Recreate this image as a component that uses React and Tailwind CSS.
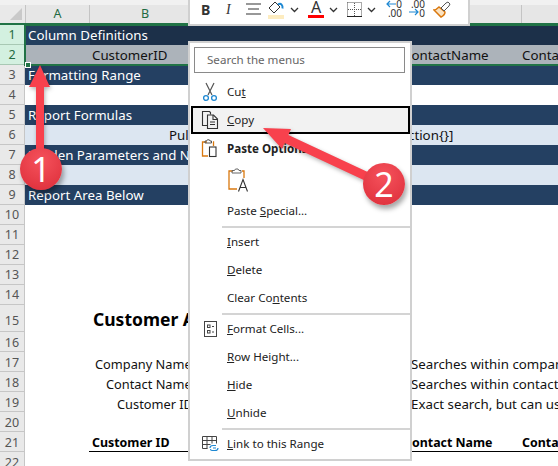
import { useState } from "react";

const cellFont = { fontFamily: '"Noto Sans", sans-serif' };

function Row({ n, h = "h-5", active, bg = "bg-white", text = "text-[#111]", labelPad = "pt-[2px]", cellPad = "pt-[2px]", children }) {
  return (
    <div className={`flex ${h} shrink-0`}>
      <div
        className={`w-[25px] shrink-0 flex items-center justify-center border-r border-b text-[12.5px] ${labelPad} ${
          active
            ? "bg-[#d3f0e0] border-[#a8c8b4] text-[#1f6b42]"
            : "bg-[#e9e9e9] border-[#c6c6c6] text-[#555]"
        }`}
      >
        {n}
      </div>
      <div className={`flex-1 flex items-center whitespace-nowrap text-[13.3px] ${cellPad} ${bg} ${text}`}>
        {children}
      </div>
    </div>
  );
}

function MenuItem({ icon, children, boxed, bold }) {
  return (
    <div
      className={`h-7 flex items-center shrink-0 ml-[1px] border-2 ${
        boxed ? "border-black bg-[#f2f2f2]" : "border-transparent"
      }`}
    >
      <div className="w-[34px] flex justify-center shrink-0">{icon}</div>
      <span className={`text-[11.6px] text-[#222] ${bold ? "font-bold" : ""}`}>{children}</span>
    </div>
  );
}

function Sep() {
  return <div className="h-[2px] mt-[1px] ml-[32px] bg-[#d4d4d4] shrink-0" />;
}

function Chevron() {
  return (
    <svg width="9" height="6" viewBox="0 0 9 6" fill="none" stroke="#333" strokeWidth="1.3">
      <path d="M1 1l3.5 3.5L8 1" />
    </svg>
  );
}

function CutIcon() {
  return (
    <svg width="16" height="20" viewBox="0 0 16 20" fill="none">
      <path d="M4 1l6 12M12 1L6 13" stroke="#555" strokeWidth="1.2" />
      <circle cx="4" cy="16" r="2.4" stroke="#1e88d2" strokeWidth="1.3" />
      <circle cx="12" cy="16" r="2.4" stroke="#1e88d2" strokeWidth="1.3" />
    </svg>
  );
}

function CopyIcon() {
  return (
    <svg width="18" height="18" viewBox="0 0 18 18" fill="none" stroke="#333" strokeWidth="1.1">
      <path d="M7 14.5H1.5v-14h7l1 1v2" />
      <path d="M6.5 4h6l4 4v9.5h-10z" />
      <path d="M12 4v4.5h4.5M9 11h5M9 13.5h5" />
    </svg>
  );
}

function PasteSmallIcon() {
  return (
    <svg width="18" height="20" viewBox="0 0 18 20" fill="none">
      <path d="M6 3H1.5v14H7" stroke="#d9780f" strokeWidth="1.3" />
      <path d="M4 4V2h1.5l.8-1.2h2L9 2h1.5v2z" stroke="#555" strokeWidth="1" />
      <path d="M12 3h.5v4" stroke="#d9780f" strokeWidth="1.3" />
      <rect x="8.5" y="8" width="6.5" height="9.5" stroke="#333" strokeWidth="1.1" />
    </svg>
  );
}

function PasteAIcon() {
  return (
    <svg width="22" height="25" viewBox="0 0 22 25" fill="none">
      <path d="M5 3H1v18h8" stroke="#d9780f" strokeWidth="1.3" />
      <path d="M14 3h2v7" stroke="#d9780f" strokeWidth="1.3" />
      <path d="M4 5V2.5h2.5L7.5 1h2.5l1 1.5H13V5z" stroke="#666" strokeWidth="1" />
      <path d="M10.5 23.5l4.5-12 4.5 12M12 19.5h6" stroke="#333" strokeWidth="1.1" />
    </svg>
  );
}

function FormatCellsIcon() {
  return (
    <svg width="13" height="16" viewBox="0 0 13 16" fill="none" stroke="#444">
      <rect x="0.5" y="0.5" width="12" height="15" />
      <rect x="3.5" y="4" width="2.5" height="2.5" />
      <rect x="3.5" y="9.5" width="2.5" height="2.5" />
      <path d="M8 5.5h2M8 11h2" />
    </svg>
  );
}

function LinkIcon() {
  return (
    <svg width="17" height="16" viewBox="0 0 17 16" fill="none">
      <path d="M.5 12.5V.5h14v7M.5 4.5h14M5 .5v12M10 .5v7M.5 8.5h8M.5 12.5h5" stroke="#444" />
      <path d="M8 12c0-2 1.500-2.500 3-2.500h3M13 14.500h-3c-1 0-1.500-.5-1.500-1.500M16 12c0 2-1.500 2.500-3 2.500M11 12h3" stroke="#1e88d2" strokeWidth="1.200" />
    </svg>
  );
}

function Toolbar() {
  return (
    <div className="absolute left-[188px] top-0 w-[282px] h-[26px] bg-white border-l-2 border-r-2 border-b-2 border-[#d0d0d0] flex items-start overflow-hidden">
      <span className="ml-[11px] mt-[1px] w-[12px] text-[14px] leading-[18px] font-bold text-[#333]">B</span>
      <span className="ml-[13px] mt-[1px] w-[8px] text-[14px] leading-[18px] italic text-[#333]" style={{ fontFamily: '"Liberation Serif", serif' }}>I</span>
      <svg className="ml-[12px] mt-[3px]" width="15" height="14" viewBox="0 0 15 14" stroke="#333" strokeWidth="1.200">
        <path d="M0 1h15M2 6h11M0 11h15" />
      </svg>
      <svg className="ml-[6px] mt-[1px]" width="18" height="18" viewBox="0 0 18 18" fill="none">
        <path d="M8 1l-6 6 5 5 6-6z" stroke="#333" />
        <path d="M11 3.500c3-2 5 1 4.500 4" stroke="#1e88d2" strokeWidth="2" />
        <rect x="1" y="14" width="16" height="4" fill="#fdecc0" />
      </svg>
      <div className="ml-[5px] mt-[7px]"><Chevron /></div>
      <div className="ml-[9px] w-[16px] flex flex-col items-center">
        <span className="text-[16px] leading-[15px] text-[#333]">A</span>
        <div className="h-[3px] w-[16px] bg-[#f00]" />
      </div>
      <div className="ml-[5px] mt-[7px]"><Chevron /></div>
      <svg className="ml-[9px] mt-[2px]" width="15" height="15" viewBox="0 0 15 15" fill="none">
        <path d="M.5.500h14v14M.5.500v14M7.500 1v13M1 7.500h13" stroke="#555" strokeDasharray="1 1" />
        <path d="M0 14.500h15" stroke="#222" />
      </svg>
      <div className="ml-[5px] mt-[7px]"><Chevron /></div>
      <div className="ml-[10px] w-[16px] relative h-[18px] text-[10px] leading-[9px] text-[#333] text-right">
        <div>0</div>
        <div>.00</div>
        <svg className="absolute left-0 top-0" width="10" height="8" viewBox="0 0 10 8" fill="none" stroke="#1e88d2" strokeWidth="1.200">
          <path d="M10 4H1M4 1L1 4l3 3" />
        </svg>
      </div>
      <div className="ml-[7px] w-[16px] relative h-[18px] text-[10px] leading-[9px] text-[#333] text-right">
        <div>.00</div>
        <div>0</div>
        <svg className="absolute left-0 top-[8px]" width="10" height="8" viewBox="0 0 10 8" fill="none" stroke="#1e88d2" strokeWidth="1.200">
          <path d="M0 4h9M6 1l3 3-3 3" />
        </svg>
      </div>
      <svg className="ml-[8px] mt-[1px]" width="18" height="17" viewBox="0 0 18 17" fill="none">
        <path d="M1 9l7 7c2-1 4-3 4-5L6 6C4 8 3 9 1 9z" stroke="#d9780f" strokeWidth="1.500" fill="#fbe3c2" />
        <path d="M8 7l5-5 2-1 2 2-1 2-5 5z" stroke="#555" />
      </svg>
    </div>
  );
}

function ContextMenu() {
  return (
    <div className="absolute left-[188px] top-[41px] w-[224px] h-[420px] bg-white border-2 border-[#d0d0d0] flex flex-col">
      <div className="ml-[4px] mr-[5px] mt-[4px] h-[26px] border border-[#8a8a8a] flex items-center pl-[12px] text-[11.6px] text-[#666] shrink-0">
        Search the menus
      </div>
      <div className="h-[5px] shrink-0" />
      <MenuItem icon={<CutIcon />}>Cu<u>t</u></MenuItem>
      <MenuItem icon={<CopyIcon />} boxed><u>C</u>opy</MenuItem>
      <div className="h-[1px] shrink-0" />
      <MenuItem icon={<PasteSmallIcon />} bold>Paste Options:</MenuItem>
      <div className="h-[34px] flex items-center pl-[38px] shrink-0"><PasteAIcon /></div>
      <MenuItem>Paste <u>S</u>pecial...</MenuItem>
      <Sep />
      <MenuItem><u>I</u>nsert</MenuItem>
      <MenuItem><u>D</u>elete</MenuItem>
      <MenuItem>Clear Co<u>n</u>tents</MenuItem>
      <Sep />
      <MenuItem icon={<FormatCellsIcon />}><u>F</u>ormat Cells...</MenuItem>
      <MenuItem><u>R</u>ow Height...</MenuItem>
      <MenuItem><u>H</u>ide</MenuItem>
      <MenuItem><u>U</u>nhide</MenuItem>
      <Sep />
      <MenuItem icon={<LinkIcon />}><u>L</u>ink to this Range</MenuItem>
    </div>
  );
}

function Badge({ className, children }) {
  return (
    <div
      className={`absolute w-[42px] h-[42px] rounded-full bg-[radial-gradient(circle_at_50%_30%,#f5525c,#dc2c38)] shadow-[2px_4px_5px_rgba(0,0,0,0.35)] flex items-center justify-center text-white text-[34px] ${className}`}
    >
      {children}
    </div>
  );
}

export default function App() {
  const [rows] = useState([10, 11, 12, 13, 14]);

  return (
    <div className="relative w-[558px] h-[466px] overflow-hidden bg-white" style={cellFont}>
      {/* top strip */}
      <div className="h-[5px] bg-[#f1f1f1]" />

      {/* column headers */}
      <div className="flex h-5 bg-[#e6e6e6] border-b-2 border-[#217346]">
        <div className="w-[25px] shrink-0 relative bg-[#e9e9e9]">
          <div className="absolute right-[3px] bottom-[3px] w-0 h-0 border-l-[12px] border-l-transparent border-b-[12px] border-b-[#c9c9c9]" />
        </div>
        <div className="w-[65px] flex items-center justify-center border-l border-r border-[#c4c4c4] text-[12.5px] text-[#1f6b42]">A</div>
        <div className="w-[110px] flex items-center justify-center text-[12.5px] text-[#1f6b42]">B</div>
        <div className="flex-1" />
        <div className="w-[52px] border-l border-[#c4c4c4]" />
        <div className="w-[37px] border-l border-[#c4c4c4]" />
      </div>

      <Row n={1} active bg="bg-[#1c3049]" text="text-white" cellPad="">
        <div className="w-[65px] h-full bg-[#24405f] flex items-center pl-[3px] pt-[2px]">Column Definitions</div>
      </Row>
      <Row n={2} active bg="bg-[#acb3ba]">
        <span className="pl-[67px] w-[378px] shrink-0">CustomerID</span>
        <span className="w-[119px] shrink-0">ContactName</span>
        <span>Contact</span>
      </Row>
      <Row n={3} bg="bg-[#244062]" text="text-white"><span className="pl-[3px]">Formatting Range</span></Row>
      <Row n={4} />
      <Row n={5} bg="bg-[#244062]" text="text-white"><span className="pl-[3px]">Report Formulas</span></Row>
      <Row n={6} bg="bg-[#dce6f1]">
        <span className="pl-[144px] w-[383px] shrink-0">Pul</span>
        <span>ction{"{}"}]</span>
      </Row>
      <Row n={7} bg="bg-[#244062]" text="text-white"><span className="pl-[3px]">Hidden Parameters and Notes</span></Row>
      <Row n={8} bg="bg-[#dce6f1]" />
      <Row n={9} bg="bg-[#244062]" text="text-white"><span className="pl-[3px]">Report Area Below</span></Row>
      {rows.map((n) => (
        <Row key={n} n={n} />
      ))}
      <Row n={15} h="h-[27px]" labelPad="pt-[7px]">
        <span className="pl-[68px] text-[17.5px] font-bold text-black">Customer Accounts</span>
      </Row>
      <Row n={16} labelPad="pt-[4px]" />
      <Row n={17} labelPad="pt-[4px]" cellPad="pt-[6px]">
        <span className="w-[386px] shrink-0 pl-[70px] text-[12.8px]">Company Name</span>
        <span>Searches within company name</span>
      </Row>
      <Row n={18} labelPad="pt-[4px]" cellPad="pt-[6px]">
        <span className="w-[386px] shrink-0 pl-[81px] text-[12.8px]">Contact Name</span>
        <span>Searches within contact name</span>
      </Row>
      <Row n={19} labelPad="pt-[4px]" cellPad="pt-[6px]">
        <span className="w-[386px] shrink-0 pl-[92px] text-[12.8px]">Customer ID</span>
        <span>Exact search, but can use wildcards</span>
      </Row>
      <Row n={20} labelPad="pt-[4px]" />
      <Row n={21} labelPad="pt-[4px]" cellPad="">
        <div className="w-full h-[21px] ml-[64px] pt-[5px] border-b-2 border-black flex items-center font-bold text-black text-[12.4px]">
          <span className="w-[315px] shrink-0 pl-[3px]">Customer ID</span>
          <span className="w-[118px] shrink-0">Contact Name</span>
          <span>Contact</span>
        </div>
      </Row>
      <Row n={22} labelPad="pt-[4px]" />

      {/* selection outline */}
      <div className="absolute left-[24px] top-[24px] right-[-4px] h-[42px] border-2 border-[#217346]" />
      <div className="absolute left-[25px] top-[62px] w-[6px] h-[6px] bg-[#217346] border border-white" />

      <Toolbar />
      <ContextMenu />

      {/* arrows */}
      <svg className="absolute left-0 top-0 drop-shadow-[1px_2px_2px_rgba(0,0,0,0.3)]" width="558" height="466" fill="none">
        <path d="M36 152V87h-7l11-22 10 22h-6v65z" fill="#f8414d" />
        <path d="M263 128L291 129L288.400 135L372 174L368 182L284.600 143L282 149Z" fill="#f8414d" />
      </svg>
      <Badge className="left-[20px] top-[148px]">1</Badge>
      <Badge className="left-[363px] top-[163px]">2</Badge>
    </div>
  );
}
